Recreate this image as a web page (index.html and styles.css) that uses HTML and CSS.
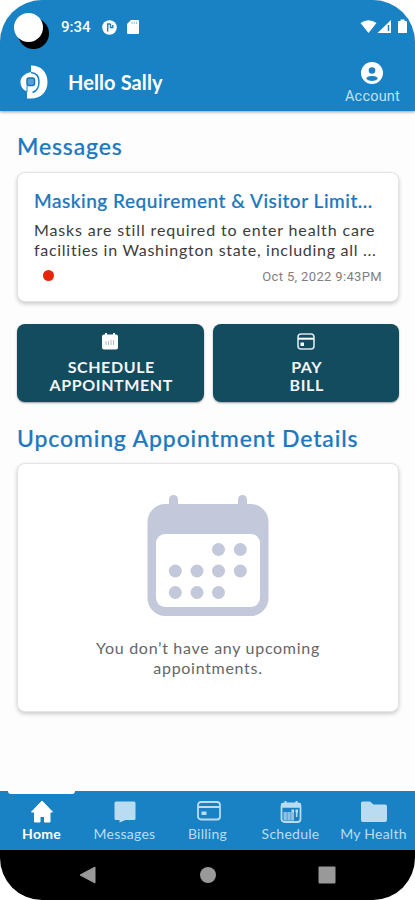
FILE: index.html
```
<!DOCTYPE html>
<html lang="en">
<head>
  <meta charset="UTF-8">
  <meta name="viewport" content="width=device-width, initial-scale=1.0">
  <title>Home</title>
  <link rel="stylesheet" href="styles.css">
</head>
<body>
  <div class="screen">
    <header class="header">
      <div class="status-bar">
        <span class="camera"></span>
        <span class="time">9:34</span>
        <svg class="status-app" width="15" height="15" viewBox="0 0 15 15">
          <circle cx="7.5" cy="7.5" r="7.3" fill="#fff"/>
          <path d="M5.7 11.5V4H8.4M8.5 3.8V7.5H10.8V5" fill="none" stroke="#1982c4" stroke-width="1.4"/>
        </svg>
        <svg class="status-card" width="12" height="14" viewBox="0 0 12 14">
          <path d="M4 0H11Q12 0 12 1V13Q12 14 11 14H1Q0 14 0 13V4Z" fill="#fff"/>
          <path d="M5 1.5V4M7.3 1.5V4M9.6 1.5V4" stroke="#8fc0e2" stroke-width="1"/>
        </svg>
        <svg class="status-right" width="48" height="16" viewBox="0 0 48 16">
          <path d="M.5 4Q8.500 -1.500 16.500 4L8.500 14Z" fill="#fff"/>
          <path d="M31 1V14H17.500Z" fill="#fff"/>
          <path d="M28.5 6V12" stroke="#1982c4" stroke-width="1.5"/>
          <path d="M39 2H40.500V.5H44.500V2H46Q47 2 47 3V14H38V3Q38 2 39 2Z" fill="#fff"/>
        </svg>
      </div>
      <div class="app-bar">
        <svg class="logo" width="28" height="34" viewBox="0 0 28 34">
          <path d="M11 .5C21 .5 27.500 7 27.500 17S21 33.500 11 33.500H7V26.500C3 25 .5 21.500 .5 17S4 8.500 11 7Z" fill="#fff"/>
          <path d="M11 7.500C17 8 19 11.500 19 17S17 26 12.500 27.500" fill="none" stroke="#1982c4" stroke-width="1.500"/>
          <path d="M7 27V20.500" stroke="#1982c4" stroke-width="1"/>
          <rect x="7" y="13" width="7.500" height="7.500" rx="2" fill="#5e9fd3" stroke="#1974b5" stroke-width="1.500"/>
        </svg>
        <span class="greeting">Hello Sally</span>
        <div class="account">
          <svg width="22" height="22" viewBox="0 0 22 22">
            <circle cx="11" cy="11" r="11" fill="#fff"/>
            <circle cx="11" cy="8.500" r="3.300" fill="#1982c4"/>
            <path d="M5.300 17Q5.300 14 11 14T16.700 17Q14.500 19 11 19T5.300 17Z" fill="#1982c4"/>
          </svg>
          <span class="account-label">Account</span>
        </div>
      </div>
    </header>

    <main class="content">
      <h2 class="section-title">Messages</h2>
      <div class="card message">
        <h3 class="message-title">Masking Requirement &amp; Visitor Limit...</h3>
        <p class="message-text"><span class="first-line">Masks are still required to enter health care</span><br>facilities in Washington state, including all ...</p>
        <div class="message-footer">
          <span class="unread"></span>
          <span class="date">Oct 5, 2022 9:43PM</span>
        </div>
      </div>

      <div class="actions">
        <div class="action">
          <svg width="18" height="17" viewBox="0 0 18 17">
            <path d="M3 1.500H4V0H6V1.500H12V0H14V1.500H15Q17 1.500 17 3.500V14.500Q17 16.500 15 16.500H3Q1 16.500 1 14.500V3.500Q1 1.500 3 1.500Z" fill="#fff"/>
            <path d="M5 8V12M7.500 8V12M10 7V12M12.500 7V12" stroke="#b1bcc5" stroke-width="1"/>
          </svg>
          <span class="action-label">SCHEDULE<br>APPOINTMENT</span>
        </div>
        <div class="action">
          <svg width="18" height="17" viewBox="0 0 18 17">
            <rect x="1" y="1" width="16" height="15" rx="3" fill="none" stroke="#dbe6ec" stroke-width="1.600"/>
            <path d="M1 5.700H17" stroke="#fff" stroke-width="2"/>
            <rect x="3.500" y="9.500" width="3.500" height="3.500" fill="#fff"/>
          </svg>
          <span class="action-label">PAY<br>BILL</span>
        </div>
      </div>

      <h2 class="section-title title-upcoming">Upcoming Appointment Details</h2>
      <div class="card appointments">
        <svg width="122" height="122" viewBox="0 0 122 122">
          <g fill="#c3c8da">
            <rect x="22" y="0" width="9" height="20" rx="4.500"/>
            <rect x="91" y="0" width="9" height="20" rx="4.500"/>
            <rect x="0.500" y="9" width="121" height="112" rx="18"/>
          </g>
          <rect x="9" y="39" width="104" height="73" rx="9" fill="#fff"/>
          <g fill="#c3c8da">
            <circle cx="71.500" cy="54.500" r="6.500"/>
            <circle cx="93.300" cy="54.500" r="6.500"/>
            <circle cx="28.300" cy="76" r="6.500"/>
            <circle cx="50" cy="76" r="6.500"/>
            <circle cx="71.500" cy="76" r="6.500"/>
            <circle cx="93.300" cy="76" r="6.500"/>
            <circle cx="28.300" cy="97.500" r="6.500"/>
            <circle cx="50" cy="97.500" r="6.500"/>
            <circle cx="71.500" cy="97.500" r="6.500"/>
          </g>
        </svg>
        <p class="empty-text">You don’t have any upcoming<br>appointments.</p>
      </div>
    </main>

    <nav class="tabs">
      <div class="tab active">
        <svg width="24" height="24" viewBox="0 0 24 24">
          <path d="M12 1L22.500 12H20V22H14.500V16.500H10V22H4.500V12H1.500Z" fill="#fff" stroke="#fff" stroke-linejoin="round"/>
        </svg>
        <span>Home</span>
      </div>
      <div class="tab">
        <svg width="24" height="24" viewBox="0 0 24 24">
          <path d="M3 1.500H21Q22.500 1.500 22.500 3V18.500Q22.500 20 21 20H12.500L6.500 22.500V20H3Q1.500 20 1.500 18.500V3Q1.500 1.500 3 1.500Z" fill="#b9dcf3"/>
        </svg>
        <span>Messages</span>
      </div>
      <div class="tab">
        <svg class="billing-icon" width="24" height="24" viewBox="0 0 24 24">
          <rect x="1" y="2" width="22" height="17.500" rx="3" fill="none" stroke="#b9dcf3" stroke-width="1.800"/>
          <path d="M1 7H23" stroke="#b9dcf3" stroke-width="2"/>
          <rect x="4.500" y="11.500" width="5" height="3.500" fill="#b9dcf3"/>
        </svg>
        <span>Billing</span>
      </div>
      <div class="tab">
        <svg width="24" height="24" viewBox="0 0 24 24">
          <path d="M6.500 1V5M17.500 1V5" stroke="#b9dcf3" stroke-width="2"/>
          <rect x="2.500" y="3.500" width="19" height="18.500" rx="3" fill="none" stroke="#b9dcf3" stroke-width="1.800"/>
          <path d="M2 5.500H22" stroke="#b9dcf3" stroke-width="4.500"/>
          <path d="M12.500 11H15M16.500 11H19" stroke="#b9dcf3" stroke-width="3"/>
          <path d="M17.700 12V17" stroke="#b9dcf3" stroke-width="1.500"/>
          <rect x="4.500" y="12" width="10.500" height="8.500" fill="#8fc3e6"/>
          <path d="M8.200 12V20M11.800 12V20" stroke="#4698d0" stroke-width="0.800"/>
        </svg>
        <span>Schedule</span>
      </div>
      <div class="tab">
        <svg width="28" height="24" viewBox="0 0 28 24">
          <path d="M2.500 1.500H10L13.500 4.500H25Q27 4.500 27 6.500V20Q27 22 25 22H3Q1 22 1 20V3Q1 1.500 2.500 1.500Z" fill="#b9dcf3"/>
        </svg>
        <span>My Health</span>
      </div>
    </nav>

    <div class="system-nav">
      <svg width="18" height="18" viewBox="0 0 18 18"><path d="M1 9L16 1V17Z" fill="#999" stroke="#999" stroke-linejoin="round"/></svg>
      <svg width="18" height="18" viewBox="0 0 18 18"><circle cx="9" cy="9" r="8" fill="#999"/></svg>
      <svg width="18" height="18" viewBox="0 0 18 18"><rect x=".5" y=".5" width="17" height="17" rx="1" fill="#999"/></svg>
    </div>
  </div>
</body>
</html>
```
FILE: styles.css
```
* {
  box-sizing: border-box;
}

body {
  margin: 0;
  background-color: #fff;
  font-family: Lato, sans-serif;
}

h2, h3, p {
  margin: 0;
}

svg {
  display: block;
  flex: none;
}

.screen {
  display: flex;
  flex-direction: column;
  width: 415px;
  height: 900px;
  background-color: #fdfdfd;
  border-radius: 42px;
  overflow: hidden;
}

/* Header */
.header {
  height: 111px;
  background-color: #1982c4;
  color: #fff;
  box-shadow: 0 1px 3px rgba(0, 0, 0, 0.4);
}

.status-bar {
  display: flex;
  align-items: center;
  height: 54px;
  padding: 0 7px 0 14px;
}

.camera {
  width: 29px;
  height: 29px;
  border-radius: 50%;
  background-color: #fff;
  box-shadow: 5px 6px 0 1px #000;
}

.time {
  width: 41px;
  margin-left: 18px;
  font-family: Roboto, sans-serif;
  font-size: 15px;
  font-weight: 500;
}

.status-card {
  margin-left: 10px;
}

.status-right {
  margin-left: auto;
}

.app-bar {
  display: flex;
  align-items: center;
  height: 56px;
  padding: 0 15px 0 20px;
}

.greeting {
  margin-left: 20px;
  font-size: 20px;
  font-weight: bold;
  letter-spacing: 0.1px;
}

.account {
  display: flex;
  flex-direction: column;
  align-items: center;
  margin-left: auto;
  padding-top: 3px;
}

.account-label {
  margin-top: 4px;
  font-family: Roboto, sans-serif;
  font-size: 14.5px;
  line-height: 18px;
  letter-spacing: 0.2px;
  color: #c3e0f3;
}

/* Main content */
.content {
  flex: 1;
  padding: 20px 16px 0 17px;
}

.section-title {
  font-size: 23px;
  font-weight: 500;
  line-height: 30px;
  letter-spacing: 0.85px;
  color: #1c78c0;
  -webkit-text-stroke: 0.2px #1c78c0;
}

.card {
  background-color: #fff;
  border: 1px solid #e4e4e4;
  border-radius: 8px;
  box-shadow: 0 2px 4px rgba(0, 0, 0, 0.2);
}

.message {
  height: 130px;
  margin-top: 11px;
  padding: 15px 16px 0;
  white-space: nowrap;
}

.message-title {
  font-size: 19px;
  font-weight: 500;
  line-height: 26px;
  letter-spacing: 0.52px;
  color: #1c78c0;
  -webkit-text-stroke: 0.2px #1c78c0;
}

.message-text {
  margin-top: 6px;
  font-size: 16px;
  line-height: 20px;
  letter-spacing: 0.72px;
  color: #3c3c3c;
}

.first-line {
  letter-spacing: 0.86px;
}

.message-footer {
  display: flex;
  align-items: center;
  justify-content: space-between;
  height: 28px;
  padding: 4px 0 0 9px;
}

.unread {
  width: 11px;
  height: 11px;
  margin-bottom: 2px;
  border-radius: 50%;
  background-color: #e32708;
}

.date {
  font-family: Roboto, sans-serif;
  font-size: 13px;
  letter-spacing: 0.35px;
  color: #808080;
}

.actions {
  display: flex;
  gap: 9px;
  margin-top: 22px;
}

.action {
  display: flex;
  flex: 1;
  flex-direction: column;
  align-items: center;
  height: 78px;
  padding-top: 9px;
  background-color: #134b5f;
  border-radius: 8px;
  box-shadow: 0 1px 2px rgba(0, 0, 0, 0.4);
}

.action-label {
  margin-top: 8px;
  padding-left: 2px;
  font-size: 16px;
  font-weight: bold;
  line-height: 18px;
  letter-spacing: 0.6px;
  text-align: center;
  color: #f2f6f8;
}

.title-upcoming {
  margin-top: 21px;
}

.appointments {
  display: flex;
  flex-direction: column;
  align-items: center;
  height: 249px;
  margin-top: 10px;
  padding-top: 31px;
}

.empty-text {
  margin-top: 21px;
  font-size: 16px;
  line-height: 20px;
  letter-spacing: 0.7px;
  text-align: center;
  color: #666;
}

/* Bottom tabs */
.tabs {
  display: grid;
  grid-template-columns: repeat(5, 83px);
  height: 59px;
  background-color: #1982c4;
}

.tab {
  display: flex;
  flex-direction: column;
  align-items: center;
  padding-top: 9px;
  font-size: 14px;
  line-height: 20px;
  letter-spacing: 0.25px;
  white-space: nowrap;
  color: #b9dcf3;
}

.billing-icon {
  margin-left: 2px;
}

.active {
  font-weight: bold;
  color: #fff;
}

.active::before {
  content: "";
  width: 67px;
  height: 3px;
  margin: -9px 0 6px;
  background-color: #fff;
  border-radius: 0 0 3px 3px;
}

/* Android buttons */
.system-nav {
  display: flex;
  justify-content: space-between;
  align-items: center;
  height: 50px;
  padding: 0 79px;
  background-color: #000;
}
```
